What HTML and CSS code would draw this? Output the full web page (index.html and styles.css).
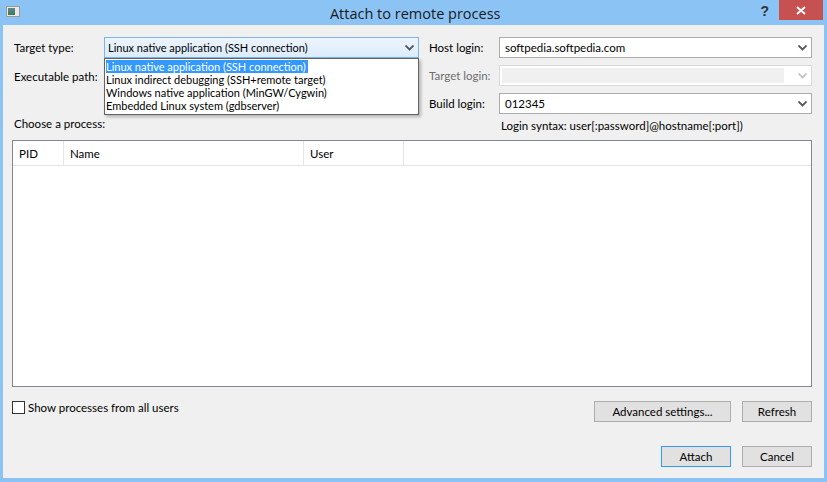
FILE: index.html
```html
<!DOCTYPE html>
<html lang="en">
<head>
  <meta charset="UTF-8">
  <title>Attach to remote process</title>
  <link rel="stylesheet" href="styles.css">
</head>
<body>

<div class="window">
  <div class="titlebar">
    <span class="app-icon"><span class="app-icon-inner"></span></span>
    <span class="title">Attach to remote process</span>
    <span class="help">?</span>
    <span class="close">
      <svg width="10" height="9" viewBox="0 0 10 9"><path d="M1 1 L9 8 M9 1 L1 8" stroke="#fff" stroke-width="2"/></svg>
    </span>
  </div>

  <div class="client">
    <div class="form">
      <div class="form-col left-col">
        <div class="label">Target type:</div>
        <div class="combo focused">
          <span class="combo-text">Linux native application (SSH connection)</span>
          <svg class="arrow" width="9" height="6" viewBox="0 0 9 6"><path d="M0.5 0.5 L4.5 4.5 L8.5 0.5" fill="none" stroke="#555" stroke-width="1.8"/></svg>
        </div>
        <div class="label exec">Executable path:</div>
        <div class="edit exec"></div>
        <div class="label wide">Choose a process:</div>

        <div class="popup">
          <div class="popup-item"><span class="selected">Linux native application (SSH connection)</span></div>
          <div class="popup-item">Linux indirect debugging (SSH+remote target)</div>
          <div class="popup-item">Windows native application (MinGW/Cygwin)</div>
          <div class="popup-item">Embedded Linux system (gdbserver)</div>
        </div>
      </div>

      <div class="form-col right-col">
        <div class="label">Host login:</div>
        <div class="combo">
          <span class="combo-text">softpedia.softpedia.com</span>
          <svg class="arrow" width="9" height="6" viewBox="0 0 9 6"><path d="M0.5 0.5 L4.5 4.5 L8.5 0.5" fill="none" stroke="#555" stroke-width="1.8"/></svg>
        </div>
        <div class="label disabled-label">Target login:</div>
        <div class="combo disabled">
          <span class="combo-fill"></span>
          <svg class="arrow" width="9" height="6" viewBox="0 0 9 6"><path d="M0.5 0.5 L4.5 4.5 L8.5 0.5" fill="none" stroke="#c4c4c4" stroke-width="1.8"/></svg>
        </div>
        <div class="label">Build login:</div>
        <div class="combo">
          <span class="combo-text">012345</span>
          <svg class="arrow" width="9" height="6" viewBox="0 0 9 6"><path d="M0.5 0.5 L4.5 4.5 L8.5 0.5" fill="none" stroke="#555" stroke-width="1.8"/></svg>
        </div>
        <div></div>
        <div class="hint">Login syntax: user[:password]@hostname[:port])</div>
      </div>
    </div>

    <div class="process-list">
      <div class="list-header">
        <div class="col col-pid">PID</div>
        <div class="col col-name">Name</div>
        <div class="col col-user">User</div>
        <div class="col col-rest"></div>
      </div>
    </div>

    <div class="row-actions">
      <label class="check"><span class="box"></span>Show processes from all users</label>
      <div class="buttons">
        <button class="btn btn-adv">Advanced settings...</button>
        <button class="btn">Refresh</button>
      </div>
    </div>

    <div class="row-dialog">
      <button class="btn default">Attach</button>
      <button class="btn">Cancel</button>
    </div>
  </div>
</div>

</body>
</html>
```

FILE: styles.css
```css
body {
  margin: 0;
  font-family: 'Lato', 'Liberation Sans', Arial, sans-serif;
  font-size: 11.5px;
  color: #000;
  background: #8cc3f5;
}

.window {
  width: 827px;
  height: 482px;
  box-sizing: border-box;
  padding: 0 3px 4px 3px;
  display: flex;
  flex-direction: column;
  background: #8cc3f5;
}

.titlebar {
  height: 25px;
  display: flex;
  align-items: flex-start;
}

.app-icon {
  margin: 6px 0 0 3px;
  width: 14px;
  height: 11px;
  background: #e8e8e8;
  border: 1px solid #9a9a9a;
  box-sizing: border-box;
  padding: 1px;
  display: flex;
}

.app-icon-inner {
  width: 7px;
  background: linear-gradient(#5a8a9a, #3d7a48);
}

.title {
  flex: 1;
  text-align: center;
  font-family: 'Open Sans', 'Liberation Sans', sans-serif;
  font-size: 14.5px;
  color: #1a1a1a;
  line-height: 28px;
  padding-left: 50px;
}

.help {
  font-family: 'Liberation Sans', sans-serif;
  font-weight: bold;
  font-size: 14px;
  color: #333;
  margin: 3px 10px 0 0;
}

.close {
  width: 44px;
  height: 20px;
  background: #c75050;
  display: flex;
  align-items: center;
  justify-content: center;
  margin-right: 1px;
}

.client {
  flex: 1;
  background: #f0f0f0;
  display: flex;
  flex-direction: column;
  padding: 12px 12px 11px 9px;
}

.form {
  display: flex;
  gap: 10px;
}

.form-col {
  display: grid;
  grid-template-rows: 21px 21px 21px 12px;
  row-gap: 7px;
  align-items: center;
}

.left-col {
  width: 405px;
  grid-template-columns: 90px 315px;
  margin-left: 2px;
  position: relative;
}

.right-col {
  flex: 1;
  grid-template-columns: 70px 1fr;
}

.exec {
  margin-top: 2px;
}

.label.wide {
  grid-row: 4;
  grid-column: 1 / span 2;
  align-self: start;
  line-height: 14px;
  margin-top: -4px;
}

.combo, .edit {
  height: 21px;
  box-sizing: border-box;
  border: 1px solid #acacac;
  background: #fff;
  display: flex;
  align-items: center;
  padding: 0 4px 0 5px;
}

.combo-text {
  flex: 1;
}

.combo.focused {
  background: linear-gradient(#ecf4fc, #dcecfc);
  border-color: #7eb4ea;
  padding-left: 3px;
  font-size: 11px;
}

.combo.disabled {
  border-color: #d9d9d9;
  background: #fff;
  padding: 2px 4px 2px 2px;
}

.combo-fill {
  flex: 1;
  align-self: stretch;
  background: #f0f0f0;
  margin-right: 10px;
}

.arrow {
  margin-left: 4px;
}

.disabled-label {
  color: #6d6d6d;
}

.hint {
  align-self: start;
  line-height: 14px;
  margin-top: -2px;
  padding-left: 2px;
}

.popup {
  position: absolute;
  left: 90px;
  top: 21px;
  width: 315px;
  box-sizing: border-box;
  background: #fff;
  border: 1px solid #646464;
  box-shadow: 2px 2px 3px rgba(0, 0, 0, 0.25);
  padding: 1px 0 2px 1px;
  font-size: 11px;
}

.popup-item {
  height: 13px;
  line-height: 13px;
  white-space: nowrap;
}

.popup-item .selected {
  display: inline-block;
  background: #3399ff;
  color: #fff;
  padding-right: 2px;
}

.process-list {
  flex: 1;
  margin-top: 7px;
  background: #fff;
  border: 1px solid #828790;
}

.list-header {
  display: flex;
  height: 24px;
  border-bottom: 1px solid #e5e5e5;
}

.col {
  border-right: 1px solid #e5e5e5;
  line-height: 25px;
  padding-left: 6px;
  box-sizing: border-box;
}

.col-pid { width: 51px; }
.col-name { width: 240px; }
.col-user { width: 100px; }
.col-rest { border-right: none; }

.row-actions {
  display: flex;
  justify-content: space-between;
  align-items: flex-start;
  margin-top: 14px;
}

.check {
  display: flex;
  align-items: center;
  gap: 3px;
}

.box {
  width: 13px;
  height: 13px;
  box-sizing: border-box;
  border: 1px solid #333;
  background: #fff;
}

.buttons {
  display: flex;
  gap: 11px;
}

.btn {
  font-family: inherit;
  font-size: inherit;
  height: 21px;
  min-width: 70px;
  box-sizing: border-box;
  background: #e1e1e1;
  border: 1px solid #adadad;
  padding: 0 8px;
  color: #000;
}

.btn-adv {
  width: 137px;
}

.btn.default {
  border-color: #3399ff;
}

.row-dialog {
  margin-top: 24px;
  display: flex;
  justify-content: flex-end;
  gap: 11px;
}
```
